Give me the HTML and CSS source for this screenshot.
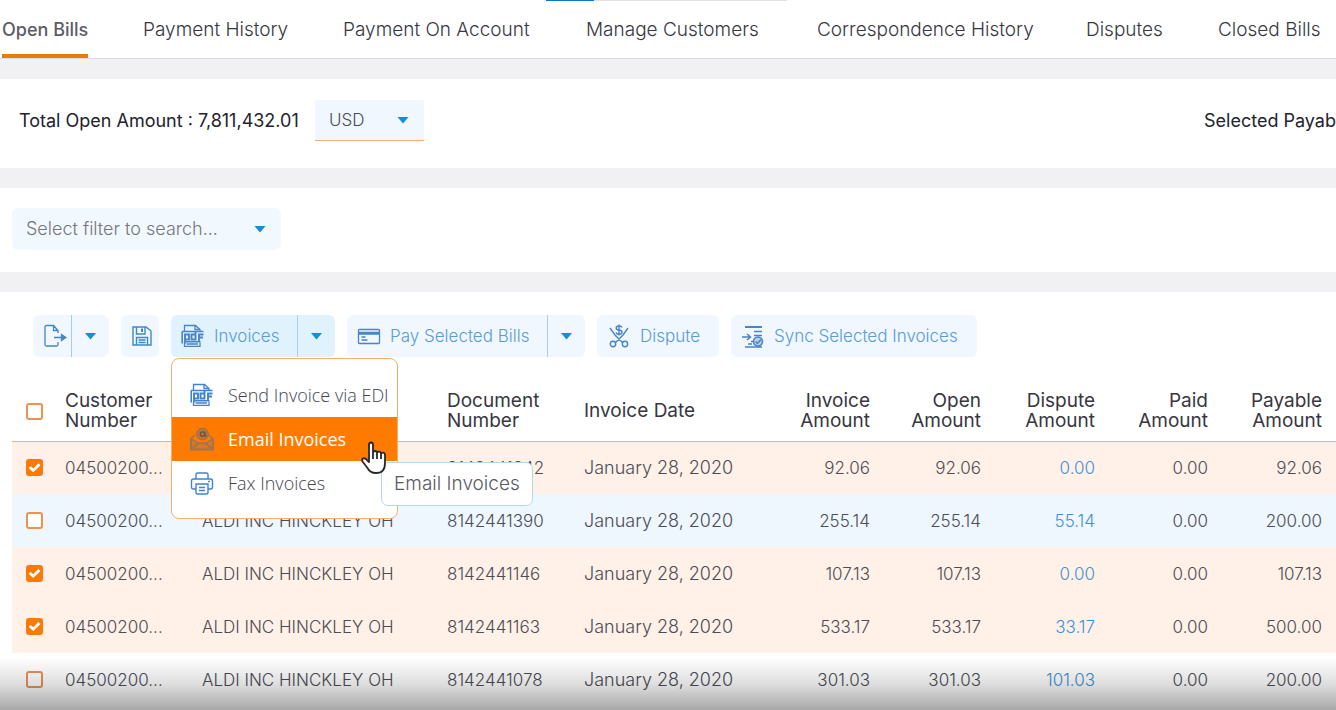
FILE: index.html
```html
<!DOCTYPE html>
<html lang="en">
<head>
<meta charset="utf-8">
<meta name="viewport" content="width=device-width, initial-scale=1">
<title>Open Bills</title>
<link rel="stylesheet" href="styles.css">
</head>
<body>
<svg class="sprite" aria-hidden="true">
  <symbol id="pdf" viewBox="0 0 24 24">
    <g fill="none" stroke="currentColor">
      <path stroke-width="1.300" d="M3.500 7V1.500h11l4.500 4V7M14 1.500V5.500h5M3.500 18.500V22.300h15.500v-3.800M5.500 20h11.500"/>
      <path stroke-width="1.600" d="M1 7.500h21.500M1.200 7.500v12M5 17.800h14.500"/>
      <path stroke-width="1.900" d="M4 19.500v-9h4v5H4M14.500 7.500v8h-4v-5h4M18 17.500V10.500h4.500M18 13.500h4"/>
    </g>
  </symbol>
</svg>

<div class="progress"><span class="progress-bar"></span></div>

<nav class="tabs">
  <a class="tab active" href="#open">Open Bills</a>
  <a class="tab" href="#history">Payment History</a>
  <a class="tab" href="#account">Payment On Account</a>
  <a class="tab" href="#customers">Manage Customers</a>
  <a class="tab" href="#correspondence">Correspondence History</a>
  <a class="tab" href="#disputes">Disputes</a>
  <a class="tab" href="#closed">Closed Bills</a>
</nav>

<main class="page">
  <section class="panel summary">
    <label class="total" for="currency">Total Open Amount : 7,811,432.01</label>
    <div class="select-box currency">
      <select id="currency"><option>USD</option></select>
      <span class="caret"></span>
    </div>
    <div class="payable">Selected Payable</div>
  </section>

  <section class="panel filter">
    <div class="select-box search">
      <select aria-label="Filter"><option>Select filter to search...</option></select>
      <span class="caret"></span>
    </div>
  </section>

  <section class="panel bills">
    <div class="toolbar">
      <div class="group">
        <button class="btn export" aria-label="Export">
          <svg class="icon" viewBox="0 0 24 24" fill="none" stroke="currentColor" stroke-width="1.300"><path d="M15 9V6.500L10.500 1.500H3.500Q2 1.500 2 3v17.500Q2 22 3.500 22h10Q15 22 15 20.500V18M10.500 1.500v5H15M11 13.500h9"/><path d="M18.500 10.500l4.500 3-4.500 3z" fill="currentColor"/></svg>
        </button>
        <button class="btn drop" aria-label="Export options"><span class="caret"></span></button>
      </div>
      <button class="btn save" aria-label="Save">
        <svg class="icon" viewBox="0 0 24 24" fill="none" stroke="currentColor" stroke-width="1.400"><path d="M3 3h13l5 4v14H3zM6.500 3v7H15V3M6.500 21v-7.500h11V21M8.500 16h7M8.500 18.500h7"/><path d="M12 4.500v3.500" stroke-width="2"/></svg>
      </button>
      <div class="group current">
        <button class="btn invoices"><svg class="icon"><use href="#pdf"/></svg>Invoices</button>
        <button class="btn drop" aria-label="Invoice options"><span class="caret"></span></button>
        <div class="menu">
          <button class="item"><svg class="icon"><use href="#pdf"/></svg>Send Invoice via EDI</button>
          <button class="item hover">
            <svg class="icon" viewBox="0 0 24 24" fill="none" stroke="currentColor" stroke-width="1.300"><path d="M5.500 8L1 11.500V22.500h22V11.500L18.500 8"/><path fill="currentColor" fill-opacity=".35" d="M1 11.500l7.500 5L1 22.500zM23 11.500l-7.500 5 7.500 6zM1 22.500l7.500-6.500h7l7.500 6.500z"/><circle cx="12.500" cy="7" r="5.800" fill="#8a6a50" fill-opacity=".5"/><g stroke="#5c5658"><circle cx="12.500" cy="7" r="2.200"/><path d="M14.700 4.800V8q.3 1.600 1.800.8"/></g></svg>
            Email Invoices
            <svg class="pointer" viewBox="0 0 28 34"><path fill="#fff" stroke="#26282c" stroke-width="1.800" stroke-linejoin="round" d="M9 18V4Q9 1.500 11 1.500T13 4v8q0-2 2-2t2 2.200q.2-1.500 2-1.500t2 2.200q.3-1.200 2-1.200t2 2.200v8Q25 32 16 32q-6 0-8.500-5L2.500 20.500Q1.500 18.500 3 17.500q2-1 4 1.500l2 2zM13 12v6M17 12v6M21 13v5"/></svg>
          </button>
          <button class="item">
            <svg class="icon" viewBox="0 0 24 24" fill="none" stroke="currentColor" stroke-width="1.400"><path d="M6 8V3.500Q6 2 7.500 2h9Q18 2 18 3.500V8M6 18H3.500Q1.500 18 1.500 16v-6Q1.500 8 3.500 8h17q2 0 2 2v6q0 2-2 2H18M6 13h12v8.500q0 1.500-1.500 1.500h-9Q6 23 6 21.500zM9 16.500h6M9 19.500h6M18 10.500h2"/></svg>
            Fax Invoices
          </button>
          <div class="tooltip" role="tooltip">Email Invoices</div>
        </div>
      </div>
      <div class="group">
        <button class="btn pay"><svg class="icon" viewBox="0 0 24 24" fill="none" stroke="currentColor" stroke-width="1.300"><rect x="1.500" y="5.500" width="21" height="14" rx="1"/><path d="M1.500 8.500h21M1.500 10h21M4.500 13h4M4.500 16h6"/></svg>Pay Selected Bills</button>
        <button class="btn drop" aria-label="Payment options"><span class="caret"></span></button>
      </div>
      <button class="btn dispute"><svg class="icon" viewBox="0 0 24 24" fill="none" stroke="currentColor" stroke-width="1.400"><path d="M3 4l5 7 8 8M21 4l-5 7-8 8M15 3.500q-.500-1.500-3-1.500-2.800 0-2.800 1.900T12 6q3 .3 3 2.200T12 10.200Q9.500 10.200 9 8.500M12 .5v11"/><circle cx="6" cy="20" r="2.700"/><circle cx="18" cy="20" r="2.700"/></svg>Dispute</button>
      <button class="btn sync"><svg class="icon" viewBox="0 0 24 24" fill="none" stroke="currentColor" stroke-width="1.500"><path stroke-width="2" d="M4 3h17"/><path d="M13 7.500h8M13 11.500h8M1 13h8M6 10l3.500 3L6 16M10 17.500h2M7 20h4M4 23h17"/><circle cx="17" cy="17.500" r="4.500" fill="currentColor" fill-opacity=".35"/><path d="M14.500 17.500l2 2 3.500-4"/></svg>Sync Selected Invoices</button>
    </div>

    <table class="grid">
      <colgroup><col class="c-check"><col class="c-cust"><col class="c-name"><col class="c-doc"><col class="c-date"><col class="c-amt"><col class="c-open"><col class="c-disp"><col class="c-paid"><col></colgroup>
      <thead>
        <tr><th><input type="checkbox" aria-label="Select all"></th><th>Customer<br>Number</th><th></th><th>Document<br>Number</th><th>Invoice Date</th><th class="num">Invoice<br>Amount</th><th class="num">Open<br>Amount</th><th class="num">Dispute<br>Amount</th><th class="num">Paid<br>Amount</th><th class="num">Payable<br>Amount</th></tr>
      </thead>
      <tbody>
        <tr class="picked"><td><input type="checkbox" checked aria-label="Select bill 1"></td><td>04500200...</td><td></td><td>8142441342</td><td class="date">January 28, 2020</td><td class="num">92.06</td><td class="num">92.06</td><td class="num"><a href="#d1">0.00</a></td><td class="num">0.00</td><td class="num">92.06</td></tr>
        <tr class="alt"><td><input type="checkbox" aria-label="Select bill 2"></td><td>04500200...</td><td>ALDI INC HINCKLEY OH</td><td>8142441390</td><td class="date">January 28, 2020</td><td class="num">255.14</td><td class="num">255.14</td><td class="num"><a href="#d2">55.14</a></td><td class="num">0.00</td><td class="num">200.00</td></tr>
        <tr class="picked"><td><input type="checkbox" checked aria-label="Select bill 3"></td><td>04500200...</td><td>ALDI INC HINCKLEY OH</td><td>8142441146</td><td class="date">January 28, 2020</td><td class="num">107.13</td><td class="num">107.13</td><td class="num"><a href="#d3">0.00</a></td><td class="num">0.00</td><td class="num">107.13</td></tr>
        <tr class="picked"><td><input type="checkbox" checked aria-label="Select bill 4"></td><td>04500200...</td><td>ALDI INC HINCKLEY OH</td><td>8142441163</td><td class="date">January 28, 2020</td><td class="num">533.17</td><td class="num">533.17</td><td class="num"><a href="#d4">33.17</a></td><td class="num">0.00</td><td class="num">500.00</td></tr>
        <tr><td><input type="checkbox" aria-label="Select bill 5"></td><td>04500200...</td><td>ALDI INC HINCKLEY OH</td><td>8142441078</td><td class="date">January 28, 2020</td><td class="num">301.03</td><td class="num">301.03</td><td class="num"><a href="#d5">101.03</a></td><td class="num">0.00</td><td class="num">200.00</td></tr>
      </tbody>
    </table>
  </section>
</main>
<div class="shade"></div>
</body>
</html>
```
FILE: styles.css
```css
* { box-sizing: border-box; }
body {
  margin: 0;
  min-height: 100vh;
  overflow: hidden;
  background: #fff;
  color: #4c4c56;
  font: 300 17px/20px Inter, "Open Sans", sans-serif;
}
a { color: inherit; text-decoration: none; }
button, select {
  margin: 0;
  padding: 0;
  border: 0;
  background: none;
  color: inherit;
  font: inherit;
}
.sprite { position: absolute; width: 0; height: 0; }
.icon { flex: none; width: 24px; height: 24px; }

.progress {
  position: absolute;
  top: 0;
  left: 546px;
  width: 241px;
  height: 1px;
  background: #e2e2e2;
}
.progress-bar { display: block; width: 48px; height: 1px; background: #0878d8; }

.tabs {
  display: grid;
  grid-template-columns: 141px 200px 243px 231px 269px 132px 1fr;
  justify-items: start;
  height: 59px;
  padding-left: 2px;
  border-bottom: 1px solid #dcdadc;
  color: #38363f;
  font-size: 19px;
  white-space: nowrap;
}
.tab { height: 58px; padding: 20px 0 14px; }
.tab.active {
  border-bottom: 4px solid #e87b08;
  font-size: 18px;
  font-weight: 500;
  color: #5c5c66;
}

.page { display: flex; flex-direction: column; gap: 20px; padding-top: 20px; background: #f1f0f3; }
.panel { background: #fff; }

.summary { display: flex; align-items: center; height: 89px; padding: 0 0 6px 19px; }
.total { width: 296px; font-size: 18px; font-weight: 400; color: #24222b; white-space: nowrap; }
.payable {
  width: 132px;
  margin-left: auto;
  font-size: 18px;
  font-weight: 400;
  color: #24222b;
  white-space: nowrap;
}

.select-box { display: grid; align-items: center; background: #f0f7fe; }
.select-box select, .select-box .caret { grid-area: 1 / 1; }
.select-box select { width: 100%; height: 100%; padding-left: 14px; appearance: none; }
.select-box .caret { justify-self: end; margin-right: 15px; pointer-events: none; }
.caret { display: block; width: 12px; height: 7px; background: #128fd6; clip-path: polygon(0 0, 100% 0, 50% 100%); }
.currency { width: 109px; height: 41px; border-bottom: 1px solid #f4ae78; }

.filter { height: 84px; padding: 20px 12px; }
.search { width: 269px; height: 42px; border-radius: 6px; color: #74747d; background: #f2f9fe; font-size: 18px; }

.bills { padding: 23px 0 4px 12px; }
.toolbar { display: flex; gap: 12px; margin-left: 21px; }
.group { position: relative; display: flex; border-radius: 6px; }
.btn {
  display: flex;
  align-items: center;
  gap: 9px;
  height: 42px;
  padding-left: 10px;
  border-radius: 6px;
  background: #f0f7fe;
  color: #5b9bd8;
  white-space: nowrap;
}
.btn .icon { color: #4a84c4; }
.group .btn:first-child { border-radius: 6px 0 0 6px; }
.group .drop {
  justify-content: center;
  width: 38px;
  padding: 0;
  border-left: 1px solid #a8cde8;
  border-radius: 0 6px 6px 0;
}
.current .btn { background: #e0f3fd; }
.export { width: 38px; }
.save { width: 38px; padding-left: 9px; }
.save .icon { color: #3d8ac4; }
.invoices { width: 126px; }
.pay { width: 200px; }
.dispute { width: 122px; }
.sync { width: 246px; }

.menu {
  position: absolute;
  z-index: 2;
  top: 43px;
  left: 0;
  width: 227px;
  padding: 14px 0 13px;
  border: 1px solid #f5ad70;
  border-radius: 8px;
  background: #fff;
}
.item {
  position: relative;
  display: flex;
  align-items: center;
  gap: 14px;
  width: 100%;
  height: 44px;
  padding-left: 18px;
  font: 300 18px/24px "Open Sans", sans-serif;
  color: #44444c;
  white-space: nowrap;
}
.item .icon { color: #3f83d0; }
.item.hover { background: #ff7b00; color: #fff; font-weight: 400; }
.item.hover .icon { color: #96745c; }
.pointer { position: absolute; z-index: 2; top: 24px; left: 188px; width: 28px; height: 34px; }
.tooltip {
  position: absolute;
  z-index: 1;
  top: 103px;
  left: 209px;
  padding: 11px 12px;
  border: 1px solid #b4d7ec;
  border-radius: 7px;
  background: #fff;
  color: #5a5a62;
  font-size: 19px;
  white-space: nowrap;
}

.grid { width: 100%; margin-top: 23px; table-layout: fixed; border-collapse: collapse; }
.c-check { width: 53px; }
.c-cust { width: 137px; }
.c-name { width: 245px; }
.c-doc { width: 137px; }
.c-date { width: 164px; }
.c-amt { width: 136px; }
.c-open { width: 111px; }
.c-disp { width: 114px; }
.c-paid { width: 113px; }
th, td { padding: 0; text-align: left; white-space: nowrap; }
th {
  height: 61px;
  padding-top: 2px;
  border-bottom: 1px solid #f5ad70;
  font-size: 19px;
  font-weight: 400;
  color: #38363f;
}
td { height: 53px; }
.date { font-size: 18px; }
.num { padding-right: 14px; text-align: right; }
.picked { background: #fff1e7; }
.alt { background: #eef6fe; }
td a { color: #3f93d4; }
input[type="checkbox"] {
  display: grid;
  place-items: center;
  width: 17px;
  height: 17px;
  margin: 0 0 0 14px;
  appearance: none;
  border: 2px solid #ee9154;
  border-radius: 3px;
  background: #fff;
}
input[type="checkbox"]:checked { border-color: #fb7a05; background: #fb7a05; }
input[type="checkbox"]:checked::after {
  content: "";
  width: 12px;
  height: 10px;
  background: #fff;
  clip-path: polygon(0 52%, 18% 34%, 40% 58%, 82% 6%, 100% 24%, 40% 94%);
}

.shade {
  position: fixed;
  z-index: 3;
  right: 0;
  bottom: 0;
  left: 0;
  height: 52px;
  background: linear-gradient(rgba(0, 0, 0, 0), rgba(0, 0, 0, .13) 50%, rgba(0, 0, 0, .34));
  pointer-events: none;
}
```
